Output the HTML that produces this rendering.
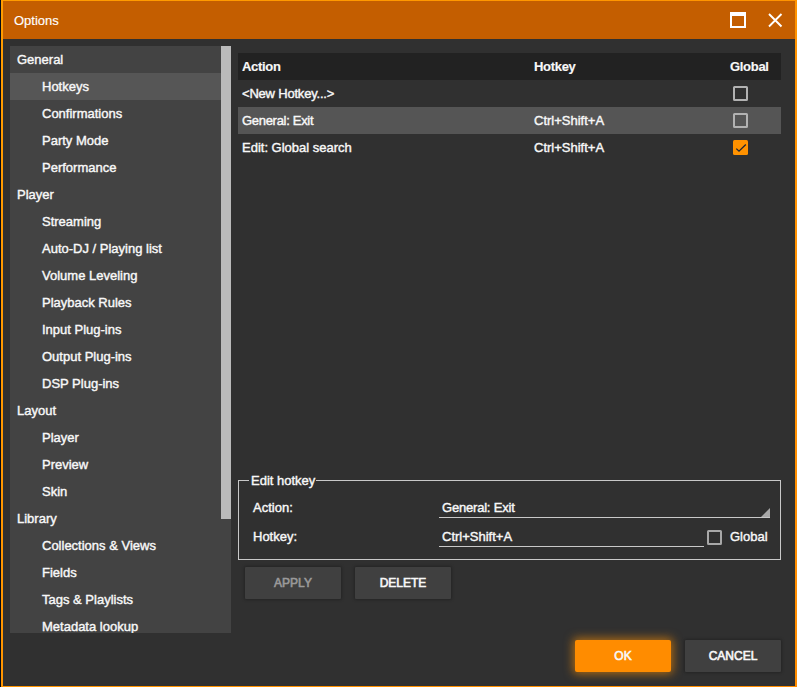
<!DOCTYPE html>
<html><head><meta charset="utf-8"><style>
html,body{margin:0;padding:0;}
body{width:797px;height:687px;position:relative;overflow:hidden;background:#020a18;font-family:"Liberation Sans",sans-serif;font-size:13px;color:#f8f8f8;}
div{position:absolute;box-sizing:border-box;}
.t{line-height:15px;white-space:nowrap;-webkit-text-stroke:0.4px #f8f8f8;}
.b{font-weight:bold;-webkit-text-stroke:0.15px #f8f8f8;letter-spacing:-0.3px;}
.n{letter-spacing:-0.2px;}
#frame{left:1px;top:0;width:796px;height:687px;background:linear-gradient(135deg,#ff9c00,#ff8c00);}
#title{left:3px;top:1px;width:792px;height:38px;background:#c45e00;}
#content{left:3px;top:39px;width:792px;height:647px;background:#303030;}
#side{left:10px;top:46px;width:221px;height:587px;background:#434343;overflow:hidden;}
#sel{left:0;top:27px;width:211px;height:27px;background:#565656;}
#thumb{left:211px;top:0;width:10px;height:473px;background:#bababa;}
.hdr{left:238px;top:53px;width:543px;height:27px;background:#222222;}
.rsel{left:238px;top:107px;width:543px;height:27px;background:#555555;}
.cb{width:15px;height:15px;border:2px solid #b2b2b2;border-radius:1.5px;}
.cbo{width:15px;height:15px;background:#ff9200;border-radius:1.5px;}
#fs{left:238px;top:480px;width:543px;height:80px;border:1px solid #c8c8c8;}
.legbg{left:249px;top:474px;width:67px;height:12px;background:#303030;}
.ul{height:1px;background:#c8c8c8;}
.btn{height:32px;width:96px;background:#404040;border-radius:1px;box-shadow:0 0 3px 1px rgba(0,0,0,0.25);text-align:center;line-height:33px;font-size:12px;-webkit-text-stroke:0.6px currentColor;}
</style></head><body>
<div id="frame"></div>
<div id="title"></div>
<div id="content"></div>
<div class="t" style="left:14px;top:13px;-webkit-text-stroke:0.15px #fff;color:#fff">Options</div>
<svg style="position:absolute;left:730px;top:12px" width="16" height="16" viewBox="0 0 16 16"><rect x="1" y="2" width="14" height="13" fill="none" stroke="#fff" stroke-width="2"/><rect x="0" y="0" width="16" height="4" fill="#fff"/></svg>
<svg style="position:absolute;left:767px;top:12px" width="16" height="16" viewBox="0 0 16 16"><path d="M2 2L14.5 14.5M14.5 2L2 14.5" stroke="#fff" stroke-width="1.9"/></svg>

<div id="side">
<div id="sel"></div>
<div id="thumb"></div>
<div class="t" style="left:7px;top:6px">General</div>
<div class="t" style="left:32px;top:33px">Hotkeys</div>
<div class="t" style="left:32px;top:60px">Confirmations</div>
<div class="t" style="left:32px;top:87px">Party Mode</div>
<div class="t" style="left:32px;top:114px">Performance</div>
<div class="t" style="left:7px;top:141px">Player</div>
<div class="t" style="left:32px;top:168px">Streaming</div>
<div class="t" style="left:32px;top:195px">Auto-DJ / Playing list</div>
<div class="t" style="left:32px;top:222px">Volume Leveling</div>
<div class="t" style="left:32px;top:249px">Playback Rules</div>
<div class="t" style="left:32px;top:276px">Input Plug-ins</div>
<div class="t" style="left:32px;top:303px">Output Plug-ins</div>
<div class="t" style="left:32px;top:330px">DSP Plug-ins</div>
<div class="t" style="left:7px;top:357px">Layout</div>
<div class="t" style="left:32px;top:384px">Player</div>
<div class="t" style="left:32px;top:411px">Preview</div>
<div class="t" style="left:32px;top:438px">Skin</div>
<div class="t" style="left:7px;top:465px">Library</div>
<div class="t" style="left:32px;top:492px">Collections &amp; Views</div>
<div class="t" style="left:32px;top:519px">Fields</div>
<div class="t" style="left:32px;top:546px">Tags &amp; Playlists</div>
<div class="t" style="left:32px;top:573px">Metadata lookup</div>
</div>

<div class="hdr"></div>
<div class="rsel"></div>
<div class="t b" style="left:242px;top:59px;">Action</div>
<div class="t b" style="left:534px;top:59px;">Hotkey</div>
<div class="t b" style="left:730px;top:59px;">Global</div>
<div class="t n" style="left:242px;top:86px;">&lt;New Hotkey...&gt;</div>
<div class="t" style="left:242px;top:113px;letter-spacing:-0.3px">General: Exit</div>
<div class="t" style="left:534px;top:113px;">Ctrl+Shift+A</div>
<div class="t" style="left:242px;top:140px;">Edit: Global search</div>
<div class="t" style="left:534px;top:140px;">Ctrl+Shift+A</div>
<div class="cb" style="left:733px;top:86px"></div>
<div class="cb" style="left:733px;top:113px"></div>
<div class="cbo" style="left:733px;top:140px"></div>
<svg style="position:absolute;left:733px;top:140px" width="15" height="15" viewBox="0 0 15 15"><path d="M3.3 8.6L6 11.2L12.8 4.5" fill="none" stroke="#1c2433" stroke-width="1.3"/></svg>

<div id="fs"></div>
<div class="legbg"></div>
<div class="t" style="left:251px;top:473px;">Edit hotkey</div>
<div class="t" style="left:253px;top:500px;">Action:</div>
<div class="t" style="left:253px;top:529px;">Hotkey:</div>
<div class="t n" style="left:442px;top:500px;">General: Exit</div>
<div class="t" style="left:442px;top:529px;">Ctrl+Shift+A</div>
<div class="ul" style="left:439px;top:517px;width:331px"></div>
<svg style="position:absolute;left:761px;top:508px" width="10" height="10" viewBox="0 0 10 10"><path d="M9 0L9 9L0 9Z" fill="#a8a8a8"/></svg>
<div class="ul" style="left:439px;top:546px;width:265px"></div>
<div class="cb" style="left:707px;top:530px;border-color:#a8a8a8"></div>
<div class="t" style="left:730px;top:529px;">Global</div>

<div class="btn" style="left:245px;top:567px;color:#9a9a9a">APPLY</div>
<div class="btn" style="left:355px;top:567px">DELETE</div>
<div class="btn" style="left:575px;top:640px;background:#ff8c00;box-shadow:0 0 10px 2px rgba(255,145,0,0.6);border-radius:2px">OK</div>
<div class="btn" style="left:685px;top:640px">CANCEL</div>
</body></html>
